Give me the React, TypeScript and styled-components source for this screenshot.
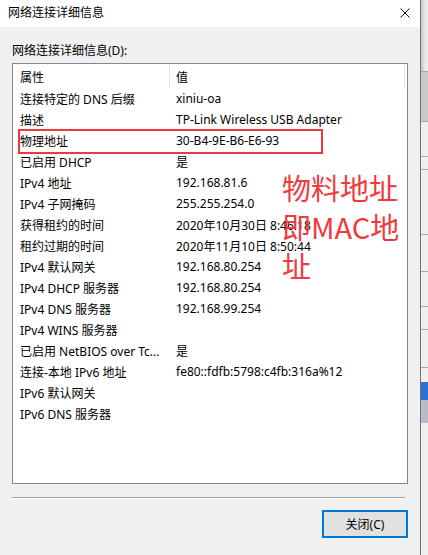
import React from 'react';
import styled, { createGlobalStyle } from 'styled-components';

const GlobalStyle = createGlobalStyle`
    html, body {
        margin: 0;
        padding: 0;
        background: #f0f0f0;
        overflow: hidden;
    }
    body {
        font-family: "Noto Sans", "Noto Sans CJK SC", sans-serif;
        font-size: 12px;
        color: #000;
    }
`;

const Screen = styled.div`
    display: flex;
    width: 428px;
    height: 555px;
    overflow: hidden;
`;

const Dialog = styled.div`
    width: 420px;
    flex-shrink: 0;
    display: flex;
    flex-direction: column;
    background: #f0f0f0;
    border-right: 1px solid #707070;
`;

const TitleBar = styled.div`
    height: 25px;
    display: flex;
    align-items: center;
    justify-content: space-between;
    padding: 0 10px 2px 8px;
    background: #fff;
`;

const Title = styled.span`
    font-size: 12px;
    line-height: 16px;
`;

const Body = styled.div`
    flex: 1;
    display: flex;
    flex-direction: column;
    padding: 16px 12px 0 12px;
`;

const GroupLabel = styled.div`
    height: 16px;
    line-height: 16px;
    margin-bottom: 4px;
`;

const ListBox = styled.div`
    position: relative;
    height: 419px;
    background: #fff;
    border: 1px solid #828790;
`;

const Row = styled.div<{ $header?: boolean }>`
    display: grid;
    grid-template-columns: 157px 235px;
    height: ${p => (p.$header ? 24 : 21)}px;
    align-items: center;
    white-space: nowrap;
`;

const Cell = styled.div<{ $header?: boolean; $indent: number }>`
    height: 100%;
    display: flex;
    align-items: center;
    padding-left: ${p => p.$indent}px;
    overflow: hidden;
    box-sizing: border-box;
    border-right: 1px solid ${p => (p.$header ? '#e5e5e5' : 'transparent')};
    padding-top: ${p => (p.$header ? '1px' : '0')};
`;

const Highlight = styled.div`
    position: absolute;
    left: 5px;
    top: 65px;
    width: 301px;
    height: 21px;
    border: 2px solid #ee3a3d;
`;

const Annotation = styled.div`
    position: absolute;
    left: 269px;
    top: 104px;
    width: 128px;
    font-family: "Noto Sans CJK SC", sans-serif;
    font-size: 29px;
    line-height: 39px;
    color: #f2393d;
    word-break: break-all;
`;

const Divider = styled.div`
    margin: 13px 3px 0 0;
    height: 1px;
    background: #a0a0a0;
    border-bottom: 1px solid #fff;
`;

const ButtonRow = styled.div`
    display: flex;
    justify-content: flex-end;
    margin-top: 11px;
`;

const Button = styled.button`
    width: 86px;
    height: 28px;
    box-sizing: border-box;
    border: 2px solid #0078d7;
    background: #e1e1e1;
    font-family: "Noto Sans", "Noto Sans CJK SC", sans-serif;
    font-size: 12px;
    color: #000;
    padding: 0;
`;

const Backdrop = styled.div`
    flex: 1;
    display: flex;
    flex-direction: column;
    background: linear-gradient(90deg, #c4c4c4 0%, #e4e4e4 50%, #efefef 100%);
`;

const Strip = styled.div<{ $h: number; $bg?: string; $line?: boolean; $ink?: string }>`
    height: ${p => p.$h}px;
    flex-shrink: 0;
    box-sizing: border-box;
    background: ${p => p.$bg || 'transparent'};
    border-bottom: ${p => (p.$line ? '1px solid #a8a8a8' : 'none')};
    overflow: hidden;
    color: ${p => p.$ink || '#000'};
    font-size: 11px;
    line-height: ${p => p.$h}px;
    white-space: nowrap;
`;

const CloseIcon = () => (
    <svg width="10" height="10" viewBox="0 0 10 10">
        <path d="M0.5 0.5 L9.5 9.5 M9.5 0.5 L0.5 9.5" stroke="#111" strokeWidth="1" fill="none" />
    </svg>
);

const rows: [string, string][] = [
    ['连接特定的 DNS 后缀', 'xiniu-oa'],
    ['描述', 'TP-Link Wireless USB Adapter'],
    ['物理地址', '30-B4-9E-B6-E6-93'],
    ['已启用 DHCP', '是'],
    ['IPv4 地址', '192.168.81.6'],
    ['IPv4 子网掩码', '255.255.254.0'],
    ['获得租约的时间', '2020年10月30日 8:46:18'],
    ['租约过期的时间', '2020年11月10日 8:50:44'],
    ['IPv4 默认网关', '192.168.80.254'],
    ['IPv4 DHCP 服务器', '192.168.80.254'],
    ['IPv4 DNS 服务器', '192.168.99.254'],
    ['IPv4 WINS 服务器', ''],
    ['已启用 NetBIOS over Tc...', '是'],
    ['连接-本地 IPv6 地址', 'fe80::fdfb:5798:c4fb:316a%12'],
    ['IPv6 默认网关', ''],
    ['IPv6 DNS 服务器', ''],
];

const App = () => {
    return (
        <Screen>
            <GlobalStyle />
            <Dialog>
                <TitleBar>
                    <Title>网络连接详细信息</Title>
                    <CloseIcon />
                </TitleBar>
                <Body>
                    <GroupLabel>网络连接详细信息(D):</GroupLabel>
                    <ListBox>
                        <Row $header>
                            <Cell $header $indent={7}>属性</Cell>
                            <Cell $header $indent={6}>值</Cell>
                        </Row>
                        {rows.map(([name, value]) => (
                            <Row key={name}>
                                <Cell $indent={7}>{name}</Cell>
                                <Cell $indent={6}>{value}</Cell>
                            </Row>
                        ))}
                        <Highlight />
                        <Annotation>物料地址即MAC地址</Annotation>
                    </ListBox>
                    <Divider />
                    <ButtonRow>
                        <Button>关闭(C)</Button>
                    </ButtonRow>
                </Body>
            </Dialog>
            <Backdrop>
                <Strip $h={72} $line />
                <Strip $h={50} $bg="#c9c9c9" $line />
                <Strip $h={35} $bg="#f0f0f0" $line />
                <Strip $h={13} $bg="#f0f0f0" $line />
                <Strip $h={65} $bg="#f0f0f0" $line />
                <Strip $h={37} $bg="#f0f0f0" $line />
                <Strip $h={35} $bg="#f0f0f0" $line />
                <Strip $h={23} $bg="#f0f0f0" $line />
                <Strip $h={38} $bg="#f0f0f0" $line />
                <Strip $h={14} $bg="#f0f0f0" />
                <Strip $h={18} $bg="#2f6fd8" />
                <Strip $h={23} $bg="#b8bcc4" />
                <Strip $h={132} $bg="#f0f0f0" />
            </Backdrop>
        </Screen>
    );
};

export default App;
